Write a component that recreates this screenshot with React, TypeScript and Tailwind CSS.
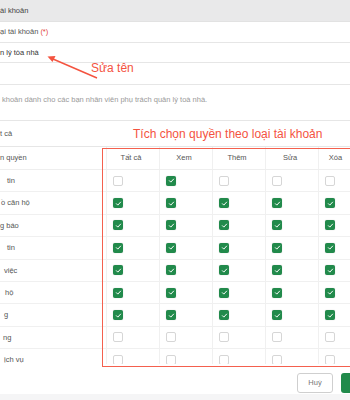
import React from 'react';

const GREEN = '#218a4b';

interface PermRow {
  label: string;
  pad: string;
  checks: boolean[];
}

const ROWS: PermRow[] = [
  { label: 'tin', pad: 'pl-[7px]', checks: [false, true, false, false, false] },
  { label: 'ồ căn hộ', pad: 'pl-[1px]', checks: [true, true, true, true, true] },
  { label: 'g báo', pad: 'pl-0', checks: [true, true, true, true, true] },
  { label: 'tin', pad: 'pl-[7px]', checks: [true, true, true, true, true] },
  { label: 'việc', pad: 'pl-[4px]', checks: [true, true, true, true, true] },
  { label: 'hộ', pad: 'pl-[5px]', checks: [true, true, true, true, true] },
  { label: 'g', pad: 'pl-[4px]', checks: [true, true, true, true, true] },
  { label: 'ng', pad: 'pl-[3px]', checks: [false, false, false, false, false] },
  { label: 'ịch vụ', pad: 'pl-[4px]', checks: [false, false, false, false, false] },
];

const COLS = ['Tất cả', 'Xem', 'Thêm', 'Sửa', 'Xóa'];

const Checkbox = ({ checked }: { checked: boolean }) =>
  checked ? (
    <span
      className="flex h-[10px] w-[10px] items-center justify-center rounded-[2px] shadow-[0_0_1px_rgba(0,0,0,0.3)]"
      style={{ backgroundColor: GREEN }}
    >
      <svg width="7" height="7" viewBox="0 0 10 10" fill="none">
        <path d="M2 5.3l2 2 4-4.3" stroke="white" strokeWidth="1.4" strokeLinecap="round" strokeLinejoin="round" />
      </svg>
    </span>
  ) : (
    <span className="block h-[10px] w-[10px] rounded-[2px] border border-[#d6d6d6] bg-white" />
  );

const colWidth = (i: number) => (i === 4 ? 'w-[38px]' : 'w-[53px]');

export default function App() {
  return (
    <div
      className="relative h-[400px] w-[350px] overflow-hidden bg-white text-[7.5px] text-[#555]"
      style={{ fontFamily: '"Liberation Sans", Arial, sans-serif' }}
    >
      <div className="w-[400px]">
        {/* form fields */}
        <div className="flex h-[22px] items-center border-b border-[#e2e2e2] bg-[#e9e9ea] text-[#444]">
          ài khoản
        </div>
        <div className="flex h-[21px] items-center border-b border-[#e6e6e6]">
          ại tài khoản <span className="ml-[2px] text-[#e2453a]">(*)</span>
        </div>
        <div className="flex h-[20px] items-center border-b border-[#e6e6e6] text-[#333]">n lý tòa nhà</div>
        <div className="h-[22px] border-b border-[#e6e6e6]" />
        <div className="h-[36px] border-b border-[#e6e6e6] pl-[2px] pt-[9px] text-[#9a9a9a]">
          khoản dành cho các bạn nhân viên phụ trách quản lý toà nhà.
        </div>
        <div className="flex h-[26px] items-center border-b border-[#e6e6e6]">t cả</div>

        {/* permission table */}
        <div className="h-[217px] overflow-hidden">
          <div className="flex h-[23px] border-b border-[#eeeeee]">
            <div className="flex w-[107px] items-center border-r border-[#f0f0f0] text-[#555]">n quyền</div>
            {COLS.map((c, i) => (
              <div
                key={c}
                className={`flex items-center justify-center border-r border-[#f0f0f0] pr-[4px] text-[#555] ${colWidth(i)}`}
              >
                {c}
              </div>
            ))}
          </div>
          {ROWS.map((r, ri) => (
            <div key={ri} className="flex h-[22.4px] border-b border-[#f0f0f0]">
              <div className={`flex w-[107px] items-center border-r border-[#f0f0f0] text-[#555] ${r.pad}`}>
                {r.label}
              </div>
              {r.checks.map((on, ci) => (
                <div key={ci} className={`flex items-center border-r border-[#f0f0f0] pl-[6px] ${colWidth(ci)}`}>
                  <Checkbox checked={on} />
                </div>
              ))}
            </div>
          ))}
        </div>

        {/* actions */}
        <div className="flex justify-end gap-[8px] pr-[14px] pt-[9px]">
          <button className="h-[20px] w-[36px] rounded-[3px] border border-[#cfcfcf] bg-white text-[7.5px] text-[#777]">
            Huỷ
          </button>
          <button
            className="h-[20px] w-[45px] rounded-[3px] pl-[12px] text-[7.5px] text-white"
            style={{ backgroundColor: GREEN }}
          >
            Lưu
          </button>
        </div>
        <div className="mt-[1px] h-[10px] bg-[#f5f5f6]" />
      </div>

      {/* annotations */}
      <div className="absolute left-[102px] top-[148px] h-[219px] w-[260px] border-[1.5px] border-[#f4604e]" />
      <div className="absolute left-[133px] top-[126px] text-[12px] leading-[16px] text-[#f4533f]">
        Tích chọn quyền theo loại tài khoản
      </div>
      <div className="absolute left-[91px] top-[60px] text-[12px] leading-[16px] text-[#f4533f]">Sửa tên</div>
      <svg className="absolute left-0 top-0" width="350" height="400" viewBox="0 0 350 400">
        <line x1="97" y1="78" x2="53" y2="59" stroke="#f4533f" strokeWidth="1.4" />
        <polygon points="47.5,56.5 55.5,56 52.5,62" fill="#f4533f" />
      </svg>
    </div>
  );
}
